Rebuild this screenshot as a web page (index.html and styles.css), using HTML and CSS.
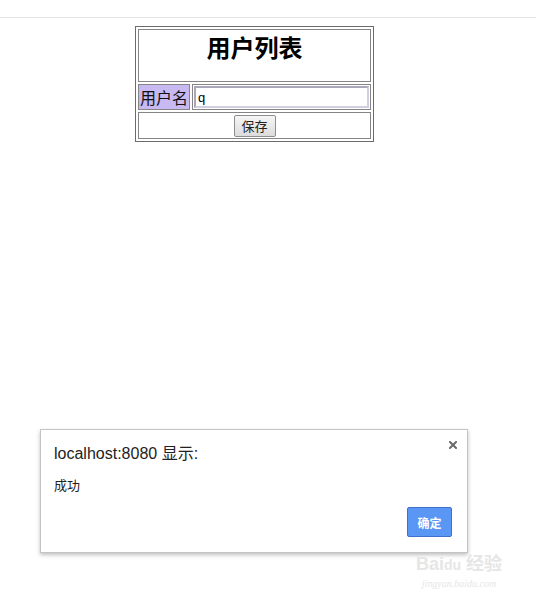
FILE: index.html
```html
<!DOCTYPE html>
<html lang="zh">
<head>
<meta charset="utf-8">
<title>用户列表</title>
<link rel="stylesheet" href="styles.css">
</head>
<body>
<div class="topbar"></div>
<div class="page">
  <table class="user-table">
    <tr>
      <td colspan="2" class="head-cell"><h2 class="title">用户列表</h2></td>
    </tr>
    <tr>
      <td class="label-cell">用户名</td>
      <td class="input-cell"><input class="name-input" type="text" value="q"></td>
    </tr>
    <tr>
      <td colspan="2" class="btn-cell"><button class="save-btn">保存</button></td>
    </tr>
  </table>
</div>

<div class="dialog">
  <svg class="close" width="8" height="8" viewBox="0 0 8 8"><path d="M1 1L7 7M7 1L1 7" stroke="#6a6a6a" stroke-width="2" stroke-linecap="square"/></svg>
  <div class="dlg-title">localhost:8080 显示:</div>
  <div class="dlg-msg">成功</div>
  <div class="dlg-foot"><button class="ok-btn">确定</button></div>
</div>

<div class="watermark">
  <div class="wm-logo">Bai<span class="wm-du">du</span> 经验</div>
  <div class="wm-url">jingyan.baidu.com</div>
</div>
</body>
</html>
```

FILE: styles.css
```css
html, body {
  margin: 0;
  padding: 0;
  background: #ffffff;
  font-family: "Liberation Sans", "Noto Sans CJK SC", sans-serif;
}

.topbar {
  height: 17px;
  border-bottom: 1px solid #e2e2e2;
}

.page {
  padding: 8px 0 0 135px;
}

.user-table {
  border: 1px solid #6c6c6c;
  border-collapse: separate;
  border-spacing: 2px;
  width: 239px;
  font-family: "Noto Sans CJK SC", sans-serif;
}

.user-table td {
  border: 1px solid #858585;
  padding: 1px;
}

.head-cell {
  text-align: center;
  vertical-align: top;
}

.title {
  margin: 2px 0 19px;
  font-size: 24px;
  line-height: 28px;
  font-weight: bold;
  color: #000;
}

.label-cell {
  background: #c8b9f2;
  font-size: 16px;
  line-height: 22px;
  white-space: nowrap;
  width: 48px;
  color: #111;
}

.name-input {
  box-sizing: border-box;
  display: block;
  width: 175px;
  height: 22px;
  margin: 0;
  border: 2px solid #a8a6b8;
  border-right-color: #d0cfe0;
  border-bottom-color: #d0cfe0;
  padding: 0 2px;
  font-family: "Liberation Sans", sans-serif;
  font-size: 13px;
  color: #000;
  background: #fff;
}

.user-table td.btn-cell {
  padding: 2px 1px 1px;
}

.save-btn {
  display: block;
  width: 42px;
  height: 22px;
  margin: 0 auto;
  padding: 0;
  border: 1px solid #8e8e8e;
  border-radius: 2px;
  background: linear-gradient(#f6f6f6, #dcdcdc);
  font-family: "Noto Sans CJK SC", sans-serif;
  font-size: 13px;
  line-height: 18px;
  color: #222;
}

.dialog {
  position: absolute;
  left: 40px;
  top: 429px;
  width: 428px;
  height: 124px;
  box-sizing: border-box;
  border: 1px solid #c4c4c4;
  background: #fff;
  box-shadow: 0 2px 4px rgba(0, 0, 0, 0.25);
  display: flex;
  flex-direction: column;
  padding: 14px 15px 15px 13px;
}

.close {
  position: absolute;
  right: 10px;
  top: 11px;
}

.dlg-title {
  font-size: 16px;
  line-height: 20px;
  color: #222;
}

.dlg-msg {
  margin-top: 13px;
  font-size: 13px;
  line-height: 16px;
  color: #222;
  font-family: "Noto Sans CJK SC", sans-serif;
}

.dlg-foot {
  margin-top: auto;
  display: flex;
  justify-content: flex-end;
}

.ok-btn {
  width: 45px;
  height: 30px;
  margin: 0;
  padding: 0;
  border: 1px solid #3f6fcf;
  border-radius: 2px;
  background: #5a96f4;
  color: #fff;
  font-family: "Noto Sans CJK SC", sans-serif;
  font-size: 12px;
  font-weight: bold;
}

.watermark {
  position: absolute;
  left: 412px;
  top: 553px;
  width: 94px;
  color: #e6e6e6;
  text-align: center;
  white-space: nowrap;
}

.wm-logo {
  font-size: 18px;
  line-height: 22px;
  font-weight: bold;
  font-family: "Liberation Sans", "Noto Sans CJK SC", sans-serif;
}

.wm-du {
  font-size: 14px;
}

.wm-url {
  margin-top: 2px;
  font-size: 10px;
  line-height: 11px;
  font-family: "Liberation Serif", serif;
  font-style: italic;
}
```
